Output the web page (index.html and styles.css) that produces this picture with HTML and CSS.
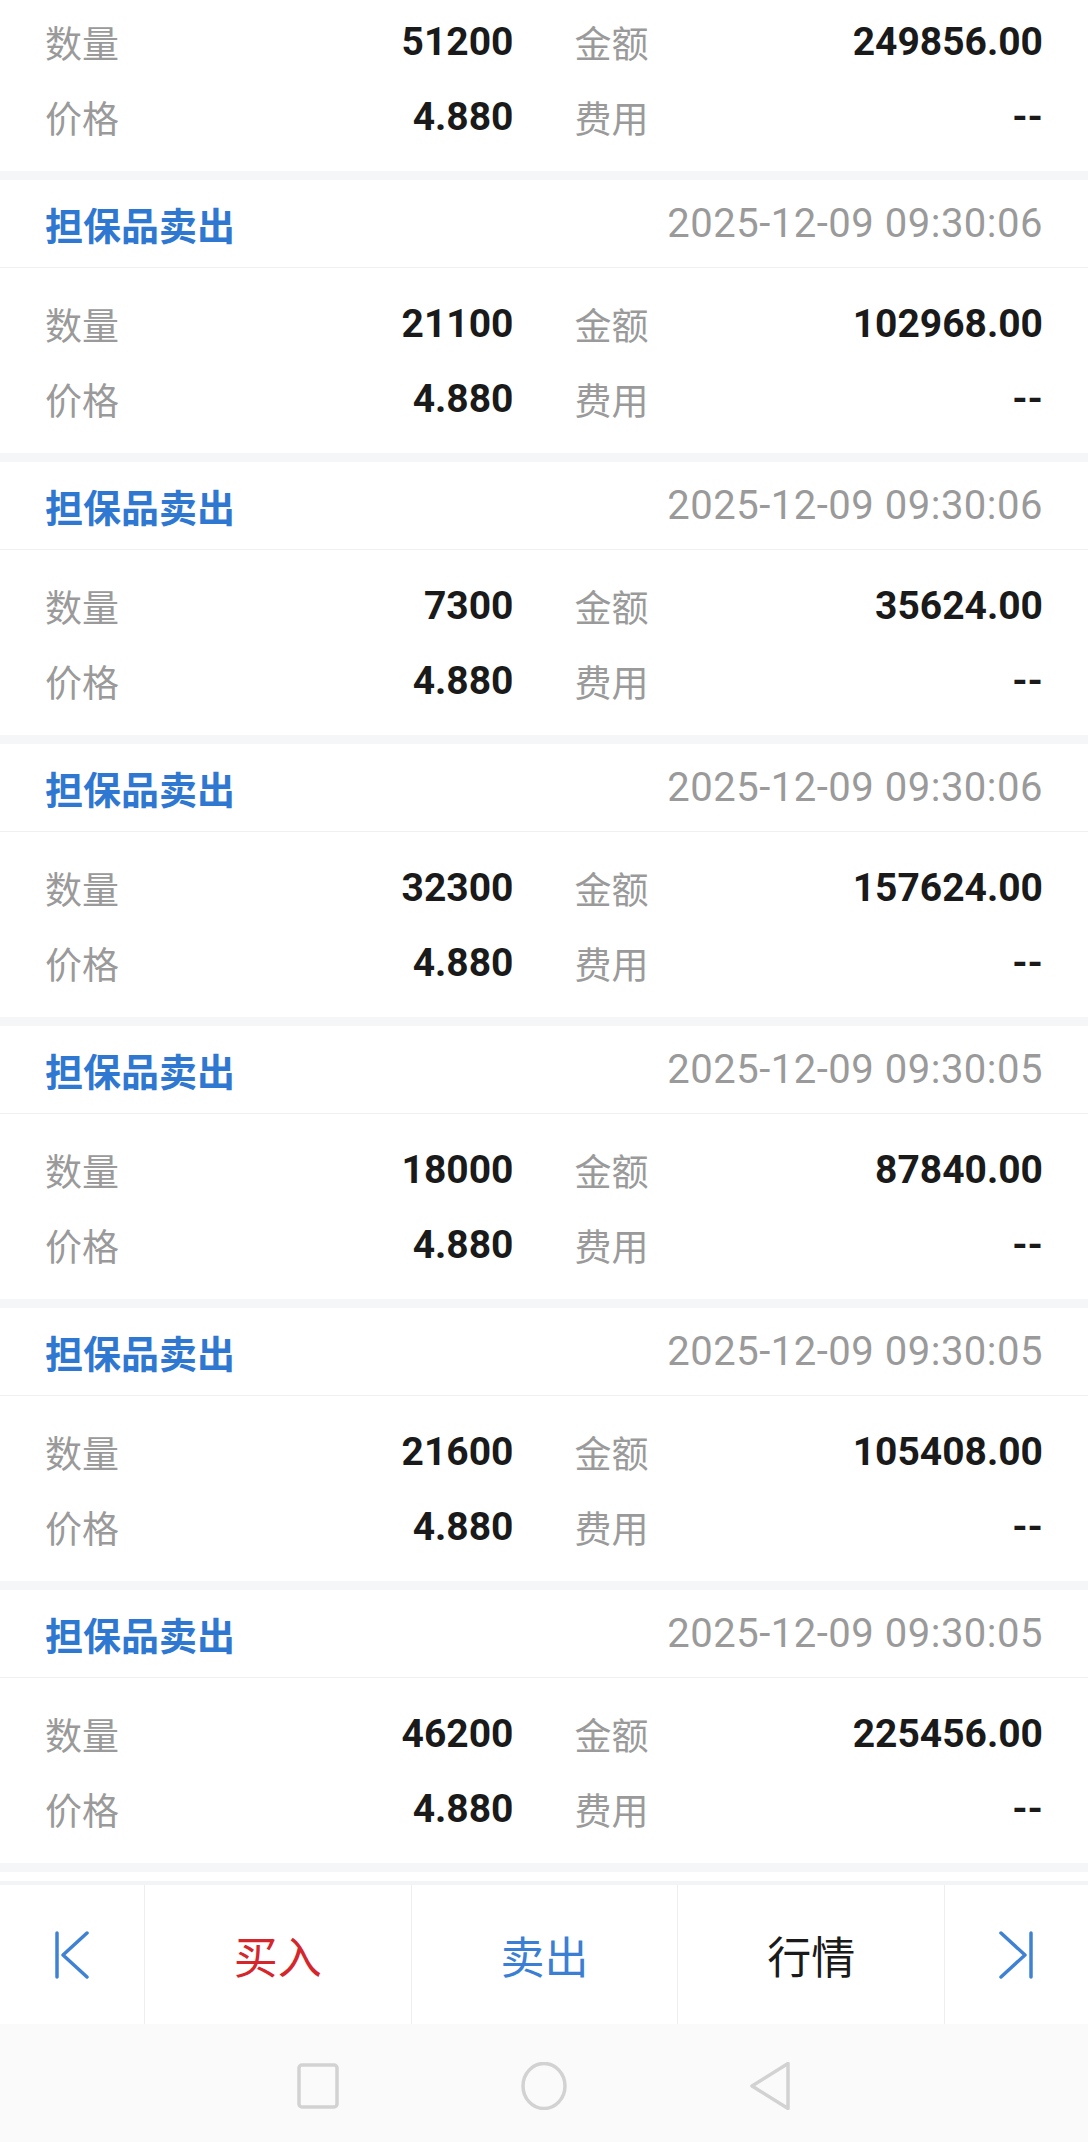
FILE: index.html
```html
<!DOCTYPE html>
<html lang="zh-CN">
<head>
    <meta charset="UTF-8">
    <meta name="viewport" content="width=device-width, initial-scale=1.0">
    <title>成交明细</title>
    <link rel="stylesheet" href="styles.css">
</head>
<body>
    <div class="screen">
        <div class="deal-list">
            <div class="deal-card first">
                <div class="deal-body">
                    <div class="deal-row">
                        <div class="cell"><span class="label">数量</span><span class="value">51200</span></div>
                        <div class="cell"><span class="label">金额</span><span class="value">249856.00</span></div>
                    </div>
                    <div class="deal-row">
                        <div class="cell"><span class="label">价格</span><span class="value">4.880</span></div>
                        <div class="cell"><span class="label">费用</span><span class="value">--</span></div>
                    </div>
                </div>
            </div>

            <div class="deal-card">
                <div class="deal-head"><span class="deal-type">担保品卖出</span><span class="deal-time">2025-12-09 09:30:06</span></div>
                <div class="deal-body">
                    <div class="deal-row">
                        <div class="cell"><span class="label">数量</span><span class="value">21100</span></div>
                        <div class="cell"><span class="label">金额</span><span class="value">102968.00</span></div>
                    </div>
                    <div class="deal-row">
                        <div class="cell"><span class="label">价格</span><span class="value">4.880</span></div>
                        <div class="cell"><span class="label">费用</span><span class="value">--</span></div>
                    </div>
                </div>
            </div>

            <div class="deal-card">
                <div class="deal-head"><span class="deal-type">担保品卖出</span><span class="deal-time">2025-12-09 09:30:06</span></div>
                <div class="deal-body">
                    <div class="deal-row">
                        <div class="cell"><span class="label">数量</span><span class="value">7300</span></div>
                        <div class="cell"><span class="label">金额</span><span class="value">35624.00</span></div>
                    </div>
                    <div class="deal-row">
                        <div class="cell"><span class="label">价格</span><span class="value">4.880</span></div>
                        <div class="cell"><span class="label">费用</span><span class="value">--</span></div>
                    </div>
                </div>
            </div>

            <div class="deal-card">
                <div class="deal-head"><span class="deal-type">担保品卖出</span><span class="deal-time">2025-12-09 09:30:06</span></div>
                <div class="deal-body">
                    <div class="deal-row">
                        <div class="cell"><span class="label">数量</span><span class="value">32300</span></div>
                        <div class="cell"><span class="label">金额</span><span class="value">157624.00</span></div>
                    </div>
                    <div class="deal-row">
                        <div class="cell"><span class="label">价格</span><span class="value">4.880</span></div>
                        <div class="cell"><span class="label">费用</span><span class="value">--</span></div>
                    </div>
                </div>
            </div>

            <div class="deal-card">
                <div class="deal-head"><span class="deal-type">担保品卖出</span><span class="deal-time">2025-12-09 09:30:05</span></div>
                <div class="deal-body">
                    <div class="deal-row">
                        <div class="cell"><span class="label">数量</span><span class="value">18000</span></div>
                        <div class="cell"><span class="label">金额</span><span class="value">87840.00</span></div>
                    </div>
                    <div class="deal-row">
                        <div class="cell"><span class="label">价格</span><span class="value">4.880</span></div>
                        <div class="cell"><span class="label">费用</span><span class="value">--</span></div>
                    </div>
                </div>
            </div>

            <div class="deal-card">
                <div class="deal-head"><span class="deal-type">担保品卖出</span><span class="deal-time">2025-12-09 09:30:05</span></div>
                <div class="deal-body">
                    <div class="deal-row">
                        <div class="cell"><span class="label">数量</span><span class="value">21600</span></div>
                        <div class="cell"><span class="label">金额</span><span class="value">105408.00</span></div>
                    </div>
                    <div class="deal-row">
                        <div class="cell"><span class="label">价格</span><span class="value">4.880</span></div>
                        <div class="cell"><span class="label">费用</span><span class="value">--</span></div>
                    </div>
                </div>
            </div>

            <div class="deal-card">
                <div class="deal-head"><span class="deal-type">担保品卖出</span><span class="deal-time">2025-12-09 09:30:05</span></div>
                <div class="deal-body">
                    <div class="deal-row">
                        <div class="cell"><span class="label">数量</span><span class="value">46200</span></div>
                        <div class="cell"><span class="label">金额</span><span class="value">225456.00</span></div>
                    </div>
                    <div class="deal-row">
                        <div class="cell"><span class="label">价格</span><span class="value">4.880</span></div>
                        <div class="cell"><span class="label">费用</span><span class="value">--</span></div>
                    </div>
                </div>
            </div>

            <div class="deal-card tail"></div>
        </div>

        <div class="toolbar">
            <div class="tool">
                <svg class="arrow" width="34" height="48" viewBox="0 0 34 48">
                    <line x1="2" y1="2" x2="2" y2="46"/>
                    <polyline points="32,2 8,24 32,46"/>
                </svg>
            </div>
            <div class="tool buy">买入</div>
            <div class="tool sell">卖出</div>
            <div class="tool quote">行情</div>
            <div class="tool">
                <svg class="arrow" width="34" height="48" viewBox="0 0 34 48">
                    <polyline points="2,2 26,24 2,46"/>
                    <line x1="32" y1="2" x2="32" y2="46"/>
                </svg>
            </div>
        </div>

        <div class="navbar">
            <svg class="nav-icon" width="46" height="48" viewBox="0 0 46 48">
                <rect x="4" y="3" width="38" height="42" rx="3"/>
            </svg>
            <svg class="nav-icon" width="46" height="48" viewBox="0 0 46 48">
                <ellipse cx="23" cy="24" rx="21" ry="22.5"/>
            </svg>
            <svg class="nav-icon" width="46" height="48" viewBox="0 0 46 48">
                <path d="M41 1.5 L5 24 L41 46.5 Z"/>
            </svg>
        </div>
    </div>
</body>
</html>
```

FILE: styles.css
```css
body {
    margin: 0;
    font-family: Roboto, "Noto Sans CJK SC", sans-serif;
    background-color: #fafafa;
}

.screen {
    width: 1088px;
    height: 2142px;
    display: flex;
    flex-direction: column;
    overflow: hidden;
}

.deal-list {
    height: 1881px;
    overflow: hidden;
    background-color: #f5f6f8;
}

.deal-card {
    background-color: white;
    margin-top: 9px;
}

.deal-card.first {
    margin-top: -14px;
}

.deal-card.tail {
    height: 40px;
}

.deal-head {
    height: 87px;
    padding: 0 45px;
    display: flex;
    justify-content: space-between;
    align-items: center;
    border-bottom: 1px solid #f0f0f0;
}

.deal-type {
    font-family: "Noto Sans CJK SC", sans-serif;
    font-size: 38px;
    font-weight: 700;
    color: #2f78d1;
}

.deal-time {
    font-size: 40px;
    letter-spacing: 0.5px;
    color: #9a9a9a;
}

.deal-body {
    padding: 18px 45px 17px;
}

.deal-row {
    height: 75px;
    display: grid;
    grid-template-columns: 1fr 1fr;
    column-gap: 61px;
    align-items: center;
}

.cell {
    display: flex;
    justify-content: space-between;
    align-items: center;
}

.label {
    font-family: "Noto Sans CJK SC", sans-serif;
    font-size: 37px;
    color: #9a9a9a;
}

.value {
    font-size: 39px;
    font-weight: 700;
    color: #1a1a1a;
}

.toolbar {
    height: 139px;
    border-top: 4px solid #f3f4f6;
    background-color: white;
    display: grid;
    grid-template-columns: 144px 1fr 1fr 1fr 144px;
}

.tool {
    display: flex;
    justify-content: center;
    align-items: center;
    font-family: "Noto Sans CJK SC", sans-serif;
    font-size: 44px;
    color: #1a1a1a;
    border-left: 1px solid #eeeeee;
}

.tool:first-child {
    border-left: none;
}

.tool.buy {
    color: #d5262c;
}

.tool.sell {
    color: #3a7fd4;
}

.arrow line,
.arrow polyline {
    fill: none;
    stroke: #3f82d3;
    stroke-width: 3.5;
    stroke-linecap: round;
    stroke-linejoin: round;
}

.navbar {
    flex: 1;
    background-color: #fafafa;
    display: flex;
    justify-content: center;
    align-items: center;
    gap: 180px;
    padding-top: 6px;
}

.nav-icon rect,
.nav-icon ellipse,
.nav-icon path {
    fill: none;
    stroke: #d2d2d2;
    stroke-width: 3.5;
    stroke-linejoin: round;
}
```
